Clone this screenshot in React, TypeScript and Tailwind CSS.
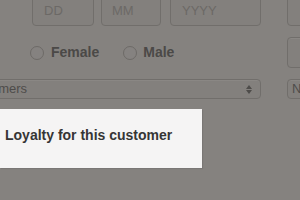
export default function App() {
  const font = { fontFamily: '"Liberation Sans", Arial, sans-serif' };
  const box = 'shrink-0 rounded-[4px] border border-[#716e6b] bg-[#83807d] shadow-[inset_0_1px_0_rgba(255,255,255,0.06)]';
  const hint = 'flex items-end pb-[6px] text-[13px] leading-[16px] text-[#6c6966]';

  return (
    <div className="w-[300px] h-[200px] overflow-hidden bg-[#85827f]" style={font}>
      {/* date row */}
      <div className="flex -mt-[10px] ml-[32px]">
        <div className={`${box} ${hint} w-[62px] h-[36px] pl-[11px]`}>DD</div>
        <div className={`${box} ${hint} ml-[7px] w-[60px] h-[36px] pl-[10px]`}>MM</div>
        <div className={`${box} ${hint} ml-[9px] w-[91px] h-[36px] pl-[11px]`}>YYYY</div>
        <div className={`${box} ml-[26px] w-[40px] h-[36px]`} />
      </div>

      {/* gender row */}
      <div className="flex mt-[11px] h-[31px]">
        <div className="flex items-center ml-[30px]">
          <span className="w-[14px] h-[14px] rounded-full border border-[#6d6a67] bg-[#858280]" />
          <span className="ml-[7px] text-[14px] font-bold text-[#4b4947]">Female</span>
          <span className="ml-[24px] w-[14px] h-[14px] rounded-full border border-[#6d6a67] bg-[#858280]" />
          <span className="ml-[6px] text-[14px] font-bold text-[#4b4947]">Male</span>
        </div>
        <div className={`${box} ml-auto -mr-[20px] w-[33px] h-[31px]`} />
      </div>

      {/* select row */}
      <div className="flex mt-[11px] h-[20px]">
        <div className={`${box} -ml-[60px] w-[321px] h-[20px] flex items-center justify-between pl-[8px] pr-[8px]`}>
          <span className="text-[13px] leading-[16px] text-[#4e4c4a] whitespace-nowrap">All customers</span>
          <span className="flex flex-col items-center text-[#4e4c4a] leading-none">
            <svg width="6" height="4" viewBox="0 0 6 4"><path d="M0 4 L3 0 L6 4Z" fill="currentColor" /></svg>
            <svg width="6" height="4" viewBox="0 0 6 4" className="mt-[1px]"><path d="M0 0 L3 4 L6 0Z" fill="currentColor" /></svg>
          </span>
        </div>
        <div className={`${box} ml-[26px] w-[40px] h-[20px] pl-[4px] text-[13px] leading-[18px] text-[#4e4c4a]`}>N</div>
      </div>

      {/* loyalty popover */}
      <div className="mt-[10px] w-[202px] h-[59px] bg-[#f5f4f4] pt-[14px] pl-[5px] shadow-[1px_1px_1px_rgba(0,0,0,0.08)]">
        <span className="text-[14px] leading-[16px] font-bold text-[#353535] whitespace-nowrap">Loyalty for this customer</span>
      </div>
    </div>
  );
}
